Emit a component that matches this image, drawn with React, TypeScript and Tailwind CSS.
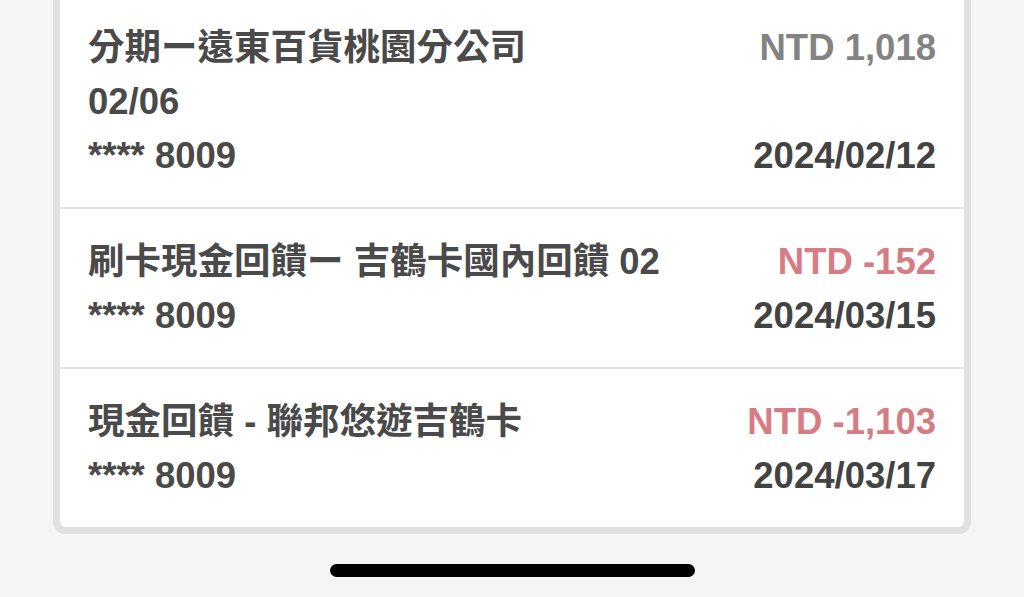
import React from "react";

interface Txn {
  title: string;
  extra?: string;
  card: string;
  amount: string;
  date: string;
  negative: boolean;
}

const txns: Txn[] = [
  {
    title: "分期ー遠東百貨桃園分公司",
    extra: "02/06",
    card: "**** 8009",
    amount: "NTD 1,018",
    date: "2024/02/12",
    negative: false,
  },
  {
    title: "刷卡現金回饋ー 吉鶴卡國內回饋 02",
    card: "**** 8009",
    amount: "NTD -152",
    date: "2024/03/15",
    negative: true,
  },
  {
    title: "現金回饋 - 聯邦悠遊吉鶴卡",
    card: "**** 8009",
    amount: "NTD -1,103",
    date: "2024/03/17",
    negative: true,
  },
];

export default function App() {
  return (
    <div
      className="w-[1024px] h-[597px] overflow-hidden bg-[#f5f5f5] flex flex-col items-center"
      style={{ fontFamily: '"Liberation Sans", "Noto Sans CJK TC", sans-serif' }}
    >
      <div className="-mt-[5px] w-[918px] bg-[#e1e1e1] px-[7px] pb-[7px] rounded-b-[12px]">
        <div className="bg-white rounded-b-[6px]">
          {txns.map((t, i) => (
            <div
              key={i}
              className={`flex justify-between px-[28px] pt-[26px] pb-[24px] text-[36.5px] font-bold ${
                i > 0 ? "border-t-2 border-[#e2e2e2]" : ""
              }`}
            >
              <div className="flex flex-col text-[#4a4a4a]">
                <div className="h-[54px] flex items-center whitespace-nowrap">{t.title}</div>
                {t.extra && <div className="h-[54px] flex items-center">{t.extra}</div>}
                <div className="h-[54px] flex items-center whitespace-pre">{t.card}</div>
              </div>
              <div className="flex flex-col justify-between items-end">
                <div className={`h-[54px] flex items-center ${t.negative ? "text-[#d67c84]" : "text-[#838383]"}`}>
                  {t.amount}
                </div>
                <div className="h-[54px] flex items-center text-[#434343]">{t.date}</div>
              </div>
            </div>
          ))}
        </div>
      </div>
      <div className="mt-[30px] w-[365px] h-[13px] rounded-full bg-black" />
    </div>
  );
}
